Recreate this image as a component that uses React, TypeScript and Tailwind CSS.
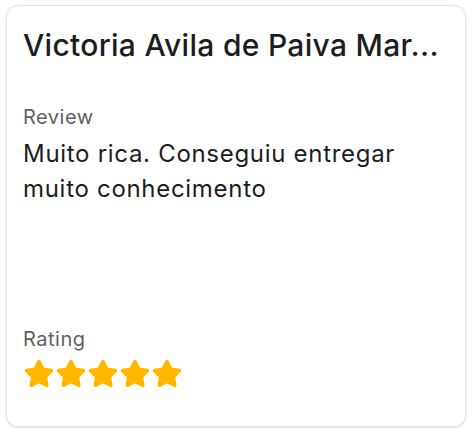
import { Star } from 'lucide-react'

export default function App() {
  return (
    <div className="w-[474px] h-[438px] bg-white pl-[6px] pt-[5px]" style={{ fontFamily: 'Inter, "Noto Sans", sans-serif' }}>
      <div className="w-[460px] h-[422px] rounded-xl border border-[#e3e3e3] shadow-[0_1px_3px_rgba(0,0,0,0.12)] bg-white pl-4 pr-3 pt-[21px] pb-[36px] flex flex-col">
        <h2 className="whitespace-nowrap overflow-hidden text-[30px] font-medium tracking-[0.3px] text-[#1d1d1f] leading-[36px]">
          Victoria Avila de Paiva Mar...
        </h2>

        <div className="mt-[42px] text-[20px] tracking-[0.5px] leading-[24px] text-[#5f5f66]">Review</div>
        <p className="mt-[7px] text-[24px] tracking-[0.7px] leading-[35px] text-[#1d1d1f]">
          Muito rica. Conseguiu entregar
          <br />
          muito conhecimento
        </p>

        <div className="flex-1" />

        <div className="text-[20px] tracking-[0.5px] leading-[24px] text-[#5f5f66]">Rating</div>
        <div className="mt-[7px] flex">
          {[0, 1, 2, 3, 4].map((i) => (
            <Star key={i} size={32} fill="#ffb800" color="#ffb800" strokeWidth={1.5} />
          ))}
        </div>
      </div>
    </div>
  )
}
